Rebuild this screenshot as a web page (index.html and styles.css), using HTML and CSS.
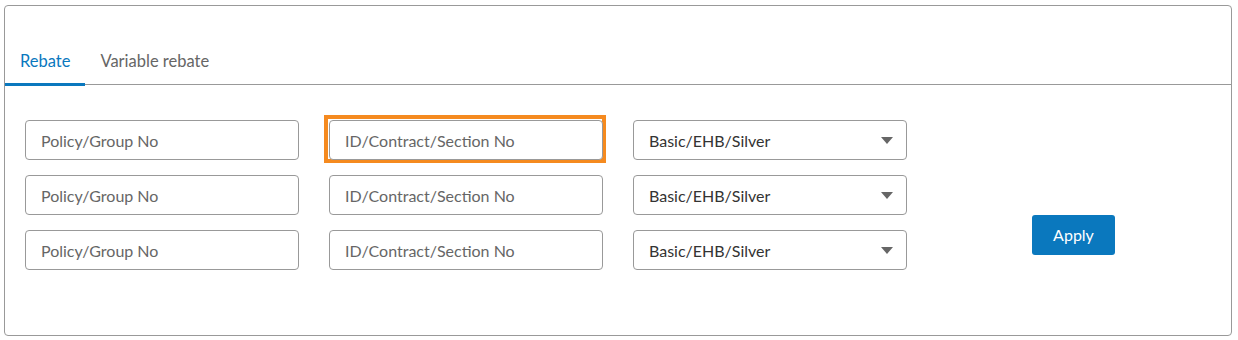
FILE: index.html
```html
<!DOCTYPE html>
<html lang="en">
<head>
    <meta charset="UTF-8">
    <meta name="viewport" content="width=device-width, initial-scale=1.0">
    <title>Rebate</title>
    <link rel="stylesheet" href="styles.css">
</head>
<body>
    <div class="panel">
        <div class="tabs">
            <a class="tab active">Rebate</a>
            <a class="tab">Variable rebate</a>
        </div>
        <div class="content">
            <div class="fields">
                <input class="field" placeholder="Policy/Group No">
                <div class="focus-ring"><input class="field" placeholder="ID/Contract/Section No"></div>
                <div class="select">Basic/EHB/Silver<span class="caret"></span></div>

                <input class="field" placeholder="Policy/Group No">
                <input class="field" placeholder="ID/Contract/Section No">
                <div class="select">Basic/EHB/Silver<span class="caret"></span></div>

                <input class="field" placeholder="Policy/Group No">
                <input class="field" placeholder="ID/Contract/Section No">
                <div class="select">Basic/EHB/Silver<span class="caret"></span></div>
            </div>
            <button class="apply">Apply</button>
        </div>
    </div>
</body>
</html>
```

FILE: styles.css
```css
body {
    margin: 0;
    padding: 5px 6px 0 4px;
    font-family: Lato, "Open Sans", sans-serif;
    background: #fff;
}
.panel {
    border: 1px solid #999;
    border-radius: 4px;
    height: 329px;
}
.tabs {
    display: flex;
    padding-top: 35px;
    border-bottom: 1px solid #999;
}
.tab {
    padding: 10px 15px 12px;
    font-size: 16.5px;
    line-height: 20px;
    color: #666;
    border-bottom: 3px solid transparent;
    margin-bottom: -2px;
}
.tab.active {
    color: #0a78be;
    border-bottom-color: #0a78be;
}
.content {
    display: flex;
    padding: 35px 20px 0 20px;
}
.fields {
    display: grid;
    grid-template-columns: repeat(3, 274px);
    column-gap: 30px;
    row-gap: 15px;
}
.field, .select {
    box-sizing: border-box;
    width: 274px;
    height: 40px;
    border: 1px solid #999;
    border-radius: 4px;
    padding: 0 15px;
    font-family: Lato, sans-serif;
    font-size: 16px;
    color: #333;
    background: #fff;
}
.field::placeholder {
    color: #666;
}
.focus-ring {
    box-sizing: border-box;
    width: 282px;
    height: 48px;
    margin: -5px -3px -3px -5px;
    padding: 1px 0 0 1px;
    border: 4px solid #f58a1f;
}
.focus-ring .field {
    display: block;
}
.select {
    display: flex;
    align-items: center;
    justify-content: space-between;
}
.caret {
    width: 0;
    height: 0;
    border-left: 6px solid transparent;
    border-right: 6px solid transparent;
    border-top: 7px solid #666;
    margin-right: -2px;
}
.apply {
    margin: 95px 0 0 125px;
    align-self: flex-start;
    width: 83px;
    height: 40px;
    padding: 0 0 2px;
    border: none;
    border-radius: 3px;
    background: #0a78be;
    color: #fff;
    font-family: Lato, sans-serif;
    font-size: 16px;
}
```
